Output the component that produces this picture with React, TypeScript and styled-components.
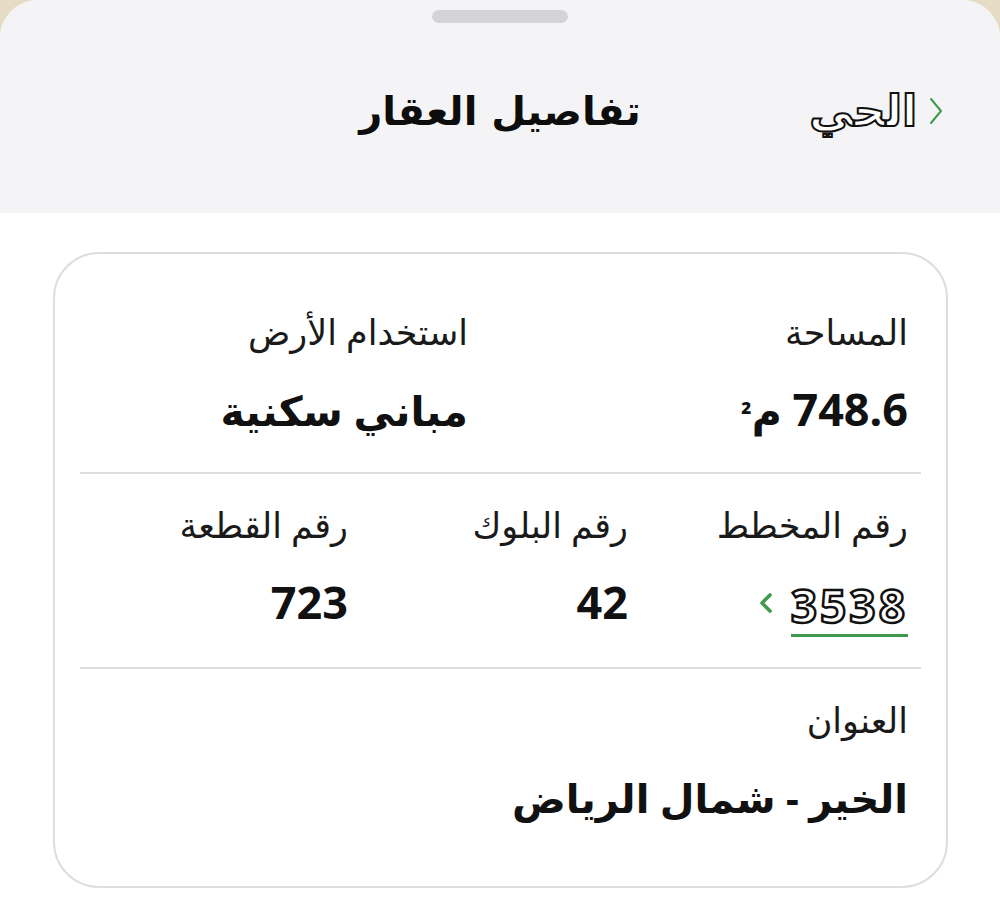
import React from "react";
import styled, { createGlobalStyle } from "styled-components";

const GlobalStyle = createGlobalStyle`
  html, body {
    margin: 0;
    padding: 0;
    background: #e6dcc6;
  }
  body {
    font-family: "Noto Sans", "DejaVu Sans", sans-serif;
    color: #111;
  }
`;

const GREEN = "#3f9a4f";
const BORDER = "#dedede";

function ChevronRight() {
  return (
    <svg width="14" height="28" viewBox="0 0 14 28" fill="none">
      <path d="M2 2 L12 14 L2 26" stroke={GREEN} strokeWidth="2" strokeLinecap="round" strokeLinejoin="round" />
    </svg>
  );
}

function ChevronLeft() {
  return (
    <svg width="16" height="22" viewBox="0 0 16 22" fill="none">
      <path d="M12 3 L4 11 L12 19" stroke={GREEN} strokeWidth="3.6" strokeLinecap="round" strokeLinejoin="round" />
    </svg>
  );
}

export default function App() {
  return (
    <>
      <GlobalStyle />
      <Sheet dir="rtl">
        <Header>
          <Grabber />
          <TitleBar>
            <BackLink>
              <ChevronRight />
              <BackText>الحي</BackText>
            </BackLink>
            <Title>تفاصيل العقار</Title>
            <span />
          </TitleBar>
        </Header>

        <Card>
          <Section $top={56} $bottom={34}>
            <Grid $cols="440px 1fr">
              <Field>
                <Label>المساحة</Label>
                <Value>
                  <Num>748.6</Num> م<Sup>²</Sup>
                </Value>
              </Field>
              <Field>
                <Label>استخدام الأرض</Label>
                <Value>مباني سكنية</Value>
              </Field>
            </Grid>
          </Section>
          <Divider />
          <Section $top={29} $bottom={36}>
            <Grid $cols="280px 280px 280px">
              <Field>
                <Label>رقم المخطط</Label>
                <LinkValue>
                  <Outlined>3538</Outlined>
                  <ChevronLeft />
                </LinkValue>
              </Field>
              <Field>
                <Label>رقم البلوك</Label>
                <Value>
                  <Num>42</Num>
                </Value>
              </Field>
              <Field>
                <Label>رقم القطعة</Label>
                <Value>
                  <Num>723</Num>
                </Value>
              </Field>
            </Grid>
          </Section>
          <Divider />
          <Section $top={29} $bottom={0}>
            <Field>
              <Label>العنوان</Label>
              <Value $size={40}>الخير - شمال الرياض</Value>
            </Field>
          </Section>
        </Card>
      </Sheet>
    </>
  );
}

const Sheet = styled.div`
  width: 1000px;
  min-height: 924px;
  background: #ffffff;
  border-radius: 38px 38px 0 0;
  overflow: hidden;
  display: flex;
  flex-direction: column;
`;

const Header = styled.header`
  height: 213px;
  background: #f4f4f6;
  display: flex;
  flex-direction: column;
`;

const Grabber = styled.div`
  align-self: center;
  margin-top: 10px;
  width: 136px;
  height: 13px;
  border-radius: 7px;
  background: #d4d4d6;
`;

const TitleBar = styled.div`
  margin-top: 48px;
  height: 80px;
  display: grid;
  grid-template-columns: 1fr auto 1fr;
  align-items: center;
`;

const BackLink = styled.div`
  justify-self: start;
  display: flex;
  align-items: center;
  gap: 12px;
  padding-right: 57px;
`;

const BackText = styled.span`
  font-family: "DejaVu Sans", sans-serif;
  font-size: 44px;
  font-weight: 700;
  color: #ffffff;
  -webkit-text-stroke: 2px #111;
  line-height: 1;
`;

const Title = styled.h1`
  margin: 0;
  font-family: "DejaVu Sans", sans-serif;
  font-size: 40px;
  font-weight: 700;
  color: #0d0d0d;
`;

const Card = styled.section`
  box-sizing: border-box;
  margin: 39px 52px 0 53px;
  height: 636px;
  border: 2px solid ${BORDER};
  border-radius: 46px;
  padding: 0 25px;
  display: flex;
  flex-direction: column;
`;

const Section = styled.div<{ $top: number; $bottom: number }>`
  padding: ${({ $top }) => $top}px 13px ${({ $bottom }) => $bottom}px;
`;

const Grid = styled.div<{ $cols: string }>`
  display: grid;
  grid-template-columns: ${({ $cols }) => $cols};
`;

const Field = styled.div`
  display: flex;
  flex-direction: column;
  align-items: flex-start;
  gap: 28px;
`;

const Label = styled.div`
  font-size: 35px;
  line-height: 44px;
  color: #1a1a1a;
`;

const Value = styled.div<{ $size?: number }>`
  height: 56px;
  font-size: ${({ $size }) => $size ?? 41}px;
  line-height: 56px;
  font-weight: 700;
  color: #111;
  white-space: nowrap;
`;

const Num = styled.span`
  font-size: 45px;
  line-height: 1;
`;

const Sup = styled.span`
  font-size: 28px;
  line-height: 1;
`;

const LinkValue = styled.div`
  display: flex;
  align-items: center;
  gap: 17px;
  height: 56px;
`;

const Outlined = styled.span`
  font-size: 46px;
  line-height: 50px;
  font-weight: 700;
  letter-spacing: 3px;
  color: #ffffff;
  -webkit-text-stroke: 2.5px #111;
  padding-bottom: 4px;
  margin-top: 10px;
  border-bottom: 3px solid ${GREEN};
`;

const Divider = styled.hr`
  margin: 0;
  border: none;
  height: 2px;
  background: ${BORDER};
`;
